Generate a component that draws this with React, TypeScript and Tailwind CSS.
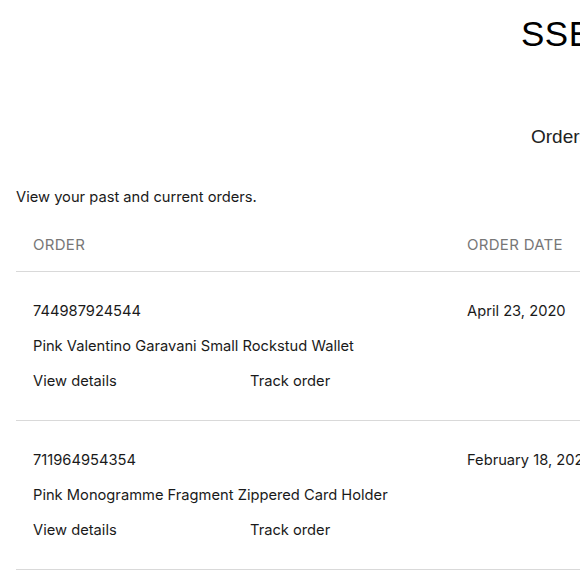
const orders = [
  {
    id: "744987924544",
    item: "Pink Valentino Garavani Small Rockstud Wallet",
    date: "April 23, 2020",
  },
  {
    id: "711964954354",
    item: "Pink Monogramme Fragment Zippered Card Holder",
    date: "February 18, 2020",
  },
];

export default function App() {
  return (
    <div className="h-[580px] w-[580px] overflow-hidden whitespace-nowrap bg-white font-['Inter','Liberation_Sans',Arial,sans-serif] text-[#1a1a1a]">
      <header className="pl-[521px] pt-[14px]">
        <div className="font-['Liberation_Sans',Arial,sans-serif] text-[35px] leading-[40px] tracking-[0.5px] text-black">
          SSENSE
        </div>
      </header>

      <h1 className="pl-[531px] pt-[71px] font-['Liberation_Sans',Arial,sans-serif] text-[19px] leading-[24px] text-[#222]">
        Orders
      </h1>

      <p className="pl-4 pt-[39px] text-[14.7px] leading-[18px]">View your past and current orders.</p>

      <section className="ml-4 mt-[20px]">
        <div className="flex h-[46px] border-b border-[#d9d9d9] pt-[8px] text-[15px] uppercase tracking-[0.3px] text-[#777]">
          <div className="w-[451px] shrink-0 pl-[17px]">Order</div>
          <div className="shrink-0">Order date</div>
        </div>

        {orders.map((order) => (
          <div
            key={order.id}
            className="flex h-[149px] border-b border-[#d9d9d9] pt-[31px] text-[14.7px] leading-[17px]"
          >
            <div className="w-[451px] shrink-0 pl-[17px]">
              <div>{order.id}</div>
              <div className="mt-[18px]">{order.item}</div>
              <div className="mt-[18px] flex">
                <a className="w-[217px]">View details</a>
                <a>Track order</a>
              </div>
            </div>
            <div className="shrink-0">{order.date}</div>
          </div>
        ))}
      </section>
    </div>
  );
}
